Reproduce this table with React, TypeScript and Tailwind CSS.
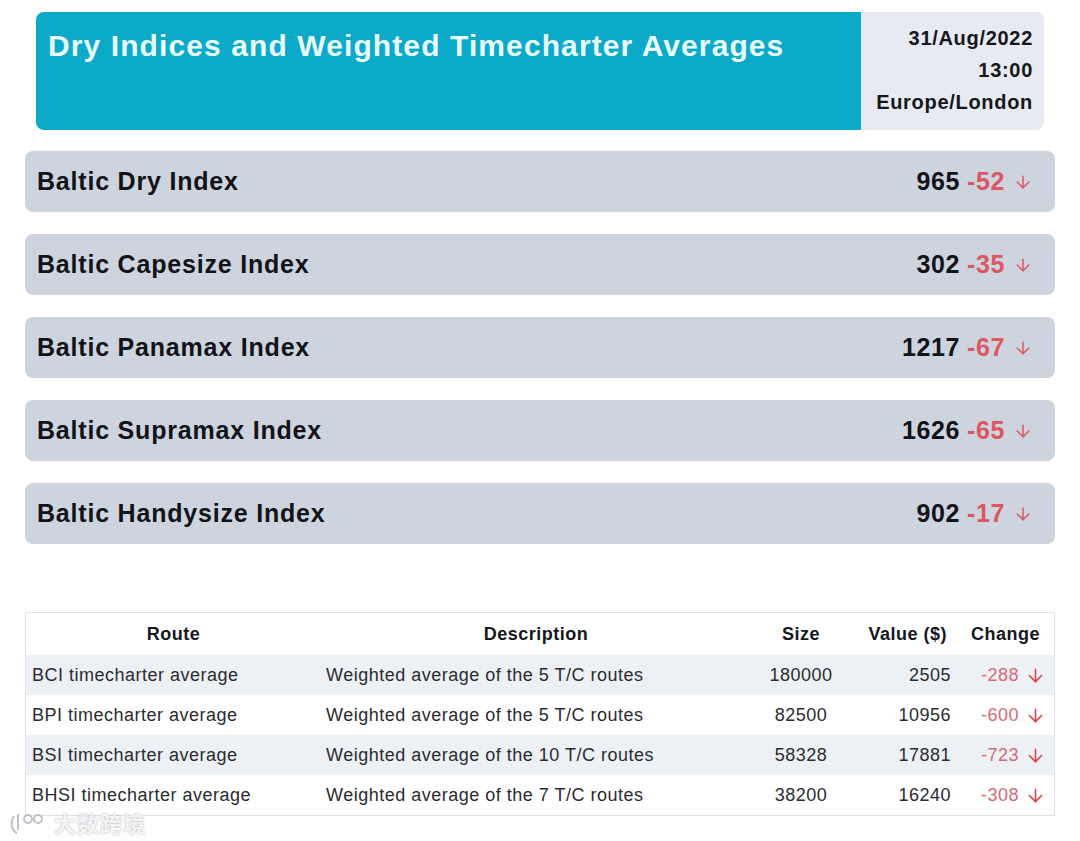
import { ArrowDown } from 'lucide-react';

const indices = [
  { name: 'Baltic Dry Index', value: '965', change: '-52' },
  { name: 'Baltic Capesize Index', value: '302', change: '-35' },
  { name: 'Baltic Panamax Index', value: '1217', change: '-67' },
  { name: 'Baltic Supramax Index', value: '1626', change: '-65' },
  { name: 'Baltic Handysize Index', value: '902', change: '-17' },
];

const routes = [
  { route: 'BCI timecharter average', desc: 'Weighted average of the 5 T/C routes', size: '180000', value: '2505', change: '-288' },
  { route: 'BPI timecharter average', desc: 'Weighted average of the 5 T/C routes', size: '82500', value: '10956', change: '-600' },
  { route: 'BSI timecharter average', desc: 'Weighted average of the 10 T/C routes', size: '58328', value: '17881', change: '-723' },
  { route: 'BHSI timecharter average', desc: 'Weighted average of the 7 T/C routes', size: '38200', value: '16240', change: '-308' },
];

export default function App() {
  return (
    <div className="relative w-[1080px] h-[841px] bg-white overflow-hidden font-['Liberation_Sans',Arial,sans-serif]">
      <div className="pt-[12px] px-[25px]">
        {/* header */}
        <div className="mx-[11px] flex h-[118px] rounded-[8px] overflow-hidden">
          <div className="flex-1 bg-[#0aaac8] pl-[12px] pt-[15px]">
            <h1 className="text-[30px] font-bold tracking-[1.1px] text-[#e9fbff] leading-[38px]">
              Dry Indices and Weighted Timecharter Averages
            </h1>
          </div>
          <div className="w-[183px] bg-[#e7eaf0] flex flex-col items-end pr-[11px] pt-[10px] text-[20px] font-bold tracking-[0.7px] text-[#15171c] leading-[32px]">
            <span>31/Aug/2022</span>
            <span>13:00</span>
            <span>Europe/London</span>
          </div>
        </div>

        {/* index bars */}
        <div className="mt-[21px] flex flex-col gap-[22px]">
          {indices.map((it) => (
            <div
              key={it.name}
              className="h-[61px] rounded-[8px] bg-[#cdd4dd] flex items-center justify-between pl-[12px] pr-[22px]"
            >
              <span className="text-[25px] font-bold tracking-[0.8px] text-[#111318]">{it.name}</span>
              <span className="flex items-center text-[25px] font-bold tracking-[0.6px]">
                <span className="text-[#111318]">{it.value}</span>
                <span className="ml-[7px] text-[#dc5663]">{it.change}</span>
                <ArrowDown className="ml-[8px] w-[20px] h-[20px] text-[#dc5663]" strokeWidth={1.8} />
              </span>
            </div>
          ))}
        </div>

        {/* table */}
        <div className="mt-[68px] border border-[#dfe2e6]">
          <table className="w-full border-collapse text-[18px] tracking-[0.5px] text-[#2a2c30]">
            <thead>
              <tr className="h-[42px] text-[#15171c]">
                <th className="w-[295px] font-bold text-center">Route</th>
                <th className="w-[430px] font-bold text-center">Description</th>
                <th className="w-[100px] font-bold text-center">Size</th>
                <th className="w-[104px] font-bold text-right pr-[8px]">Value ($)</th>
                <th className="font-bold text-right pr-[14px]">Change</th>
              </tr>
            </thead>
            <tbody>
              {routes.map((r, i) => (
                <tr key={r.route} className={`h-[40px] ${i % 2 === 0 ? 'bg-[#edf0f5]' : 'bg-white'}`}>
                  <td className="pl-[6px]">{r.route}</td>
                  <td className="pl-[5px]">{r.desc}</td>
                  <td className="text-center">{r.size}</td>
                  <td className="text-right pr-[4px]">{r.value}</td>
                  <td className="text-right pr-[8px]">
                    <span className="inline-flex items-center text-[#d46a78]">
                      {r.change}
                      <ArrowDown className="ml-[6px] w-[21px] h-[21px] text-[#d9414f]" strokeWidth={1.8} />
                    </span>
                  </td>
                </tr>
              ))}
            </tbody>
          </table>
        </div>
      </div>

      {/* watermark */}
      <div className="absolute left-[8px] top-[806px] flex items-center gap-[4px] opacity-90 [text-shadow:0_0_2px_#9aa0a8]">
        <svg width="42" height="26" viewBox="0 0 42 26" fill="none" stroke="#b8bcc2" strokeWidth="2">
          <path d="M6 6 C2 12 3 20 9 23" />
          <path d="M10 4 L10 20" />
          <circle cx="20" cy="9" r="4" />
          <circle cx="30" cy="9" r="4" />
        </svg>
        <span className="text-[22px] font-bold tracking-[1px] text-[#f4f5f7] font-['Noto_Sans_CJK_SC',sans-serif]">大数跨境</span>
      </div>
    </div>
  );
}
